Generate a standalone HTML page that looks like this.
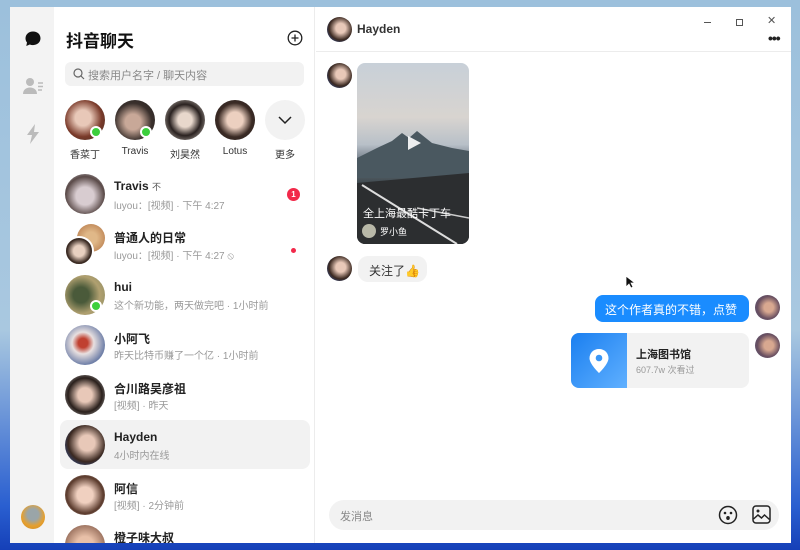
<!DOCTYPE html>
<html><head><meta charset="utf-8"><style>
*{margin:0;padding:0;box-sizing:border-box}
body{width:800px;height:550px;overflow:hidden;font-family:"Liberation Sans","Noto Sans CJK SC",sans-serif;background:linear-gradient(180deg,#9cc0dc 0%,#a9c8e0 60%,#2a5fd0 92%,#1540b8 100%);position:relative}
.win{position:absolute;left:10px;top:7px;width:781px;height:536px;background:#fff;overflow:hidden}
.rail{position:absolute;left:0;top:0;width:44px;height:100%;background:#f3f3f3}
.list{position:absolute;left:44px;top:0;width:261px;height:100%;background:#fff;border-right:1px solid #ececec}
.abs{position:absolute}
.av{position:absolute;border-radius:50%;overflow:hidden}
.t{position:absolute;white-space:nowrap}
.on{position:absolute;width:12px;height:12px;border-radius:50%;background:#3ccf3c;border:2px solid #fff}
</style></head><body>
<div class="win">
 <div class="rail">
  <svg class="abs" style="left:14px;top:23px" width="18" height="18" viewBox="0 0 18 18"><path d="M9 1.5C4.6 1.5 1.5 4.4 1.5 8.4c0 1.6.6 3 1.5 4.1L2.3 16l3.5-1.5c1 .4 2.1.6 3.2.6 4.4 0 7.5-2.9 7.5-6.8S13.4 1.5 9 1.5z" fill="#111"/></svg>
  <svg class="abs" style="left:13px;top:70px" width="22" height="18" viewBox="0 0 22 18"><circle cx="7" cy="5" r="4" fill="#bbb"/><path d="M0 17c0-4 3-6.5 7-6.5s7 2.5 7 6.5z" fill="#bbb"/><path d="M15 6h5M15 9.5h5M15 13h4" stroke="#bbb" stroke-width="1.5"/></svg>
  <svg class="abs" style="left:16px;top:117px" width="14" height="20" viewBox="0 0 14 20"><path d="M9 0L1 11h5l-2 9 9-12H8z" fill="#bbb"/></svg>
  <div class="av" style="left:11px;top:498px;width:24px;height:24px;background:radial-gradient(circle at 50% 40%,#9aa5a8 30%,#e5a030 60%,#d08a20)"></div>
 </div>
 <div class="list">
  <div class="t" style="left:12px;top:20px;font-size:17px;font-weight:bold;color:#111">抖音聊天</div>
  <svg class="abs" style="left:233px;top:23px" width="16" height="16" viewBox="0 0 16 16"><circle cx="8" cy="8" r="6.8" fill="none" stroke="#222" stroke-width="1.3"/><path d="M8 4.5v7M4.5 8h7" stroke="#222" stroke-width="1.3"/></svg>
  <div class="abs" style="left:11px;top:55px;width:239px;height:24px;background:#f2f2f2;border-radius:6px"></div>
  <svg class="abs" style="left:19px;top:61px" width="12" height="12" viewBox="0 0 12 12"><circle cx="5" cy="5" r="4" fill="none" stroke="#666" stroke-width="1.2"/><path d="M8 8l3 3" stroke="#666" stroke-width="1.2"/></svg>
  <div class="t" style="left:34px;top:60px;font-size:11px;color:#888">搜索用户名字 / 聊天内容</div>

  <div class="av" style="left:11px;top:93px;width:40px;height:40px;background:radial-gradient(circle at 45% 45%,#e8c8b8 25%,#7a3a2a 60%,#3a2a22)"></div><div class="on" style="left:36px;top:119px"></div>
  <div class="av" style="left:61px;top:93px;width:40px;height:40px;background:radial-gradient(circle at 45% 55%,#c8a898 25%,#3a302c 60%,#252020)"></div><div class="on" style="left:86px;top:119px"></div>
  <div class="av" style="left:111px;top:93px;width:40px;height:40px;background:radial-gradient(circle at 50% 50%,#e8d8cc 25%,#2a2220 55%,#d8d0c8)"></div>
  <div class="av" style="left:161px;top:93px;width:40px;height:40px;background:radial-gradient(circle at 50% 50%,#ecd0c0 28%,#3a2a24 60%,#2a2220)"></div>
  <div class="av" style="left:211px;top:93px;width:40px;height:40px;background:#f2f2f2"></div>
  <svg class="abs" style="left:224px;top:108px" width="14" height="10" viewBox="0 0 14 10"><path d="M1 2l6 6 6-6" fill="none" stroke="#222" stroke-width="1.5"/></svg>
  <div class="t" style="left:7px;top:139px;font-size:10px;color:#333;width:48px;text-align:center">香菜丁</div>
  <div class="t" style="left:57px;top:139px;font-size:10px;color:#333;width:48px;text-align:center">Travis</div>
  <div class="t" style="left:107px;top:139px;font-size:10px;color:#333;width:48px;text-align:center">刘昊然</div>
  <div class="t" style="left:157px;top:139px;font-size:10px;color:#333;width:48px;text-align:center">Lotus</div>
  <div class="t" style="left:207px;top:139px;font-size:10px;color:#333;width:48px;text-align:center">更多</div>

  <div class="abs" style="left:6px;top:413px;width:250px;height:49px;background:#f2f2f2;border-radius:8px"></div>

  <div class="av" style="left:11px;top:167px;width:40px;height:40px;background:radial-gradient(circle at 50% 55%,#d8ccd0 30%,#5a4a48 65%,#cfcfd8)"></div>
  <div class="t" style="left:60px;top:172px;font-size:12px;font-weight:bold;color:#222">Travis <span style="font-size:9px;font-weight:normal;color:#555">不</span></div>
  <div class="t" style="left:60px;top:190px;font-size:10px;color:#999">luyou：[视频] · 下午 4:27</div>
  <div class="abs" style="left:233px;top:181px;width:13px;height:13px;border-radius:50%;background:#f2294a;color:#fff;font-size:8px;font-weight:bold;text-align:center;line-height:13px">1</div>

  <div class="av" style="left:23px;top:217px;width:28px;height:28px;background:radial-gradient(circle,#e0b888 30%,#b07040)"></div>
  <div class="av" style="left:10px;top:229px;width:30px;height:30px;background:radial-gradient(circle at 50% 50%,#e8d0c0 30%,#3a2a22 65%);border:2px solid #fff"></div>
  <div class="t" style="left:60px;top:222px;font-size:12px;font-weight:bold;color:#222">普通人的日常</div>
  <div class="t" style="left:60px;top:240px;font-size:10px;color:#999">luyou：[视频] · 下午 4:27 ⦸</div>
  <div class="abs" style="left:237px;top:241px;width:5px;height:5px;border-radius:50%;background:#f2294a"></div>

  <div class="av" style="left:11px;top:268px;width:40px;height:40px;background:radial-gradient(circle at 40% 50%,#4a5a3a 25%,#b0a070 60%,#8a8a60)"></div><div class="on" style="left:36px;top:293px"></div>
  <div class="t" style="left:60px;top:273px;font-size:12px;font-weight:bold;color:#222">hui</div>
  <div class="t" style="left:60px;top:290px;font-size:10px;color:#999">这个新功能，两天做完吧 · 1小时前</div>

  <div class="av" style="left:11px;top:318px;width:40px;height:40px;background:radial-gradient(circle at 45% 45%,#c04030 15%,#e8e0e0 35%,#7080a8 70%)"></div>
  <div class="t" style="left:60px;top:323px;font-size:12px;font-weight:bold;color:#222">小阿飞</div>
  <div class="t" style="left:60px;top:340px;font-size:10px;color:#999">昨天比特币赚了一个亿 · 1小时前</div>

  <div class="av" style="left:11px;top:368px;width:40px;height:40px;background:radial-gradient(circle at 50% 50%,#e8c8b8 25%,#2a201c 60%,#c8c8c8)"></div>
  <div class="t" style="left:60px;top:373px;font-size:12px;font-weight:bold;color:#222">合川路吴彦祖</div>
  <div class="t" style="left:60px;top:390px;font-size:10px;color:#999">[视频] · 昨天</div>

  <div class="av" style="left:11px;top:418px;width:40px;height:40px;background:radial-gradient(circle at 55% 45%,#e8c8b8 25%,#3a2820 60%,#2a60c0)"></div>
  <div class="t" style="left:60px;top:423px;font-size:12px;font-weight:bold;color:#222">Hayden</div>
  <div class="t" style="left:60px;top:440px;font-size:10px;color:#999">4小时内在线</div>

  <div class="av" style="left:11px;top:468px;width:40px;height:40px;background:radial-gradient(circle at 50% 50%,#f0d0c0 28%,#5a3a2c 65%,#e0c8c0)"></div>
  <div class="t" style="left:60px;top:473px;font-size:12px;font-weight:bold;color:#222">阿信</div>
  <div class="t" style="left:60px;top:490px;font-size:10px;color:#999">[视频] · 2分钟前</div>

  <div class="av" style="left:11px;top:518px;width:40px;height:40px;background:radial-gradient(circle,#e8c0a8 30%,#6a4030)"></div>
  <div class="t" style="left:60px;top:522px;font-size:12px;font-weight:bold;color:#222">橙子味大叔</div>
 </div>

 <div class="abs" style="left:306px;top:0;width:475px;height:100%">
  <div class="abs" style="left:0;top:44px;width:100%;height:1px;background:#ececec"></div>
  <div class="av" style="left:11px;top:10px;width:25px;height:25px;background:radial-gradient(circle at 55% 45%,#e8c8b8 25%,#3a2820 60%,#2a60c0)"></div>
  <div class="t" style="left:41px;top:15px;font-size:12px;font-weight:bold;color:#333">Hayden</div>
  <div class="abs" style="left:388px;top:15px;width:7px;height:1px;background:#555"></div>
  <div class="abs" style="left:420px;top:12px;width:7px;height:7px;border:1px solid #555"></div>
  <div class="t" style="left:451px;top:7px;font-size:11px;color:#555">✕</div>
  <div class="t" style="left:452px;top:23px;font-size:14px;font-weight:bold;color:#222;letter-spacing:-1px">•••</div>

  <div class="av" style="left:11px;top:56px;width:25px;height:25px;background:radial-gradient(circle at 55% 45%,#e8c8b8 25%,#3a2820 60%,#2a60c0)"></div>
  <div class="abs" style="left:41px;top:56px;width:112px;height:181px;border-radius:8px;overflow:hidden;background:linear-gradient(180deg,#c8d0d8 0%,#d8d4d0 30%,#b8c0c8 45%,#6a7480 55%,#3a4448 68%,#2e3234 80%,#262828 100%)">
   <svg class="abs" style="left:0;top:0" width="112" height="181"><path d="M0 95 L20 85 L35 78 L45 70 L52 75 L60 68 L75 80 L95 85 L112 88 L112 115 L0 115z" fill="#4a5860"/><path d="M0 120 L112 110 L112 181 L0 181z" fill="#2c2e30"/><path d="M5 122 L100 181" stroke="#ddd" stroke-width="2"/><path d="M60 145 L112 155" stroke="#ccc" stroke-width="1.5"/><path d="M51 73 L64 80 L51 87z" fill="#fff" opacity=".9"/></svg>
   <div class="t" style="left:6px;top:142px;font-size:11px;color:#fff">全上海最酷卡丁车</div>
   <div class="av" style="left:5px;top:161px;width:14px;height:14px;background:#b8b8a8"></div>
   <div class="t" style="left:23px;top:162px;font-size:9px;color:#fff">罗小鱼</div>
  </div>

  <div class="av" style="left:11px;top:249px;width:25px;height:25px;background:radial-gradient(circle at 55% 45%,#e8c8b8 25%,#3a2820 60%,#2a60c0)"></div>
  <div class="abs" style="left:42px;top:249px;width:69px;height:26px;background:#f2f2f2;border-radius:10px"></div>
  <div class="t" style="left:53px;top:255px;font-size:12px;color:#333">关注了<span style="color:#e8a830">👍</span></div>
  <svg class="abs" style="left:309px;top:268px" width="10" height="14" viewBox="0 0 10 14"><path d="M1 1v11l3-3 2 4 2-1-2-4h4z" fill="#111" stroke="#fff" stroke-width=".8"/></svg>

  <div class="abs" style="left:279px;top:288px;width:154px;height:27px;background:#1a8cff;border-radius:8px"></div>
  <div class="t" style="left:289px;top:294px;font-size:12px;color:#fff">这个作者真的不错，点赞</div>
  <div class="av" style="left:439px;top:288px;width:25px;height:25px;background:radial-gradient(circle at 55% 50%,#d8a890 25%,#6a5060 60%,#505078)"></div>
  <div class="abs" style="left:255px;top:326px;width:178px;height:55px;background:#f2f2f2;border-radius:8px;overflow:hidden"><div class="abs" style="left:0;top:0;width:56px;height:55px;background:linear-gradient(135deg,#1a7ff0,#60b0ff)"></div>
   <svg class="abs" style="left:17px;top:15px" width="22" height="26" viewBox="0 0 22 26"><path d="M11 1C5.5 1 1.5 5 1.5 10.2 1.5 16 11 25 11 25s9.5-9 9.5-14.8C20.5 5 16.5 1 11 1z" fill="#fff"/><circle cx="11" cy="10" r="3.3" fill="#3a96f6"/></svg>
   <div class="t" style="left:65px;top:13px;font-size:11px;font-weight:bold;color:#222">上海图书馆</div>
   <div class="t" style="left:65px;top:30px;font-size:9px;color:#999">607.7w 次看过</div>
  </div>
  <div class="av" style="left:439px;top:326px;width:25px;height:25px;background:radial-gradient(circle at 55% 50%,#d8a890 25%,#6a5060 60%,#505078)"></div>

  <div class="abs" style="left:13px;top:493px;width:450px;height:30px;background:#f2f2f2;border-radius:15px"></div>
  <div class="t" style="left:24px;top:501px;font-size:11px;color:#888">发消息</div>
  <svg class="abs" style="left:402px;top:498px" width="20" height="20" viewBox="0 0 20 20"><circle cx="10" cy="10" r="8.5" fill="none" stroke="#222" stroke-width="1.5"/><circle cx="7" cy="8" r="1.3" fill="#222"/><circle cx="13" cy="8" r="1.3" fill="#222"/><ellipse cx="10" cy="13" rx="1.8" ry="2" fill="#222"/></svg>
  <svg class="abs" style="left:436px;top:498px" width="19" height="19" viewBox="0 0 19 19"><rect x="1" y="1" width="17" height="17" rx="3" fill="none" stroke="#222" stroke-width="1.5"/><circle cx="6" cy="6" r="1.5" fill="#222"/><path d="M1.5 14l4.5-4 3.5 3 3-3 5 4.5" fill="none" stroke="#222" stroke-width="1.5"/></svg>
 </div>
</div>
</body></html>
